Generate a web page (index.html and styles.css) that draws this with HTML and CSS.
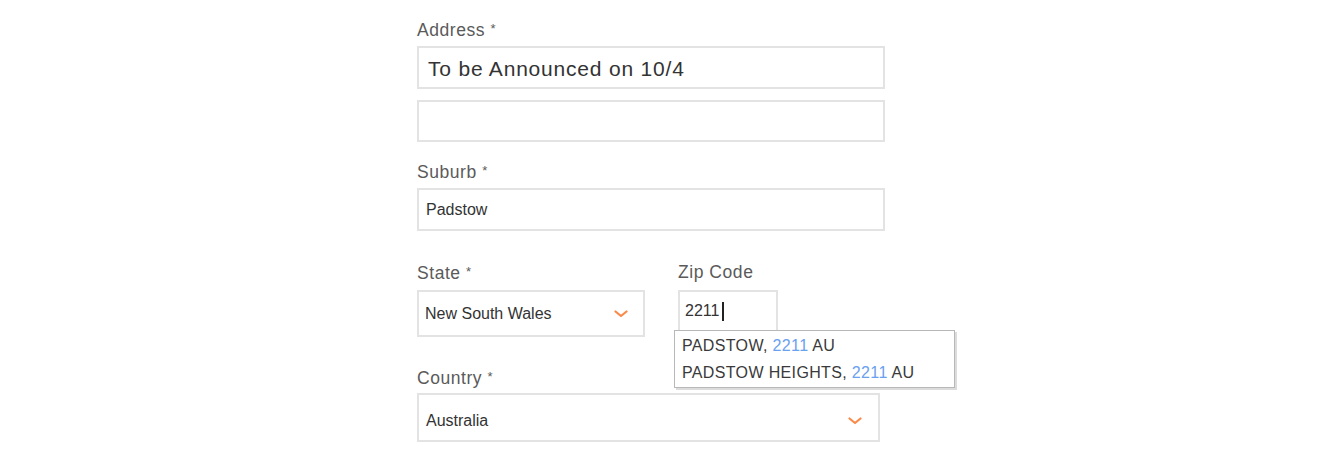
FILE: index.html
```html
<!DOCTYPE html>
<html lang="en">
<head>
<meta charset="utf-8">
<title>Address form</title>
<link rel="stylesheet" href="styles.css">
</head>
<body>
<form class="form">
  <div class="field">
    <div class="label">Address <span class="req">*</span></div>
    <div class="box box-address"><span class="val-lg">To be Announced on 10/4</span></div>
    <div class="box box-address2"></div>
  </div>

  <div class="field field-suburb">
    <div class="label">Suburb <span class="req">*</span></div>
    <div class="box box-suburb"><span class="val">Padstow</span></div>
  </div>

  <div class="row">
    <div class="field field-state">
      <div class="label">State <span class="req">*</span></div>
      <div class="box box-select box-state">
        <span class="val">New South Wales</span>
        <svg class="chev" width="14" height="8" viewBox="0 0 14 8"><path d="M1.5 1.5 L7 6 L12.5 1.5" fill="none" stroke="#f98a4a" stroke-width="2.2" stroke-linecap="round" stroke-linejoin="round"/></svg>
      </div>
    </div>
    <div class="field field-zip">
      <div class="label">Zip Code</div>
      <div class="box box-zip"><span class="val">2211</span><span class="caret"></span></div>
      <ul class="suggest">
        <li>PADSTOW, <span class="hl">2211</span> AU</li>
        <li>PADSTOW HEIGHTS, <span class="hl">2211</span> AU</li>
      </ul>
    </div>
  </div>

  <div class="field field-country">
    <div class="label">Country <span class="req">*</span></div>
    <div class="box box-select box-country">
      <span class="val">Australia</span>
      <svg class="chev" width="14" height="8" viewBox="0 0 14 8"><path d="M1.5 1.5 L7 6 L12.5 1.5" fill="none" stroke="#f98a4a" stroke-width="2.2" stroke-linecap="round" stroke-linejoin="round"/></svg>
    </div>
  </div>
</form>
</body>
</html>
```

FILE: styles.css
```css
html, body {
  margin: 0;
  padding: 0;
  background: #ffffff;
}

body {
  font-family: "Liberation Sans", Arial, sans-serif;
  color: #333;
}

.form {
  width: 468px;
  margin-left: 417px;
  padding-top: 19px;
}

.label {
  font-size: 17.5px;
  letter-spacing: 0.55px;
  line-height: 20px;
  height: 20px;
  color: #5a5a5a;
  margin-bottom: 7px;
}

.req {
  font-size: 13px;
  vertical-align: 3px;
}

.box {
  box-sizing: border-box;
  border: 2px solid #e3e3e3;
  background: #fff;
  display: flex;
  align-items: center;
}

.box-address {
  height: 43px;
  padding-left: 9px;
  padding-top: 2px;
}

.box-address2 {
  height: 42px;
  margin-top: 11px;
}

.val-lg {
  font-size: 21px;
  letter-spacing: 0.8px;
  color: #333;
}

.val {
  font-size: 16px;
  color: #333;
}

.field-suburb {
  margin-top: 19px;
}

.box-suburb {
  height: 43px;
  padding-left: 7px;
}

.row {
  display: flex;
  gap: 33px;
  margin-top: 31px;
}

.field-state {
  width: 228px;
}

.field-state .label,
.field-zip .label {
  margin-bottom: 8px;
}

.box-select {
  justify-content: space-between;
  padding-left: 6px;
  padding-right: 15px;
}

.box-state {
  height: 47px;
}

.chev {
  display: block;
}

.field-zip {
  position: relative;
  width: 100px;
}

.box-zip {
  width: 100px;
  height: 42px;
  padding-left: 5px;
  align-items: center;
}

.caret {
  display: inline-block;
  width: 1.5px;
  height: 19px;
  background: #222;
  margin-left: 3px;
}

.suggest {
  position: absolute;
  left: -4px;
  top: 68px;
  width: 281px;
  height: 58px;
  box-sizing: border-box;
  margin: 0;
  padding: 1px 0 0 7px;
  list-style: none;
  background: #fff;
  border: 1px solid #b8b8b8;
  box-shadow: 2px 2px 0 #dcdcdc;
  font-size: 16px;
  letter-spacing: 0.35px;
  color: #3a3a3a;
}

.suggest li {
  line-height: 27px;
  height: 27px;
  white-space: nowrap;
}

.hl {
  color: #6aa0f0;
}

.field-country {
  margin-top: 30px;
  width: 463px;
}

.field-country .label {
  margin-bottom: 6px;
}

.box-country {
  height: 49px;
  padding-top: 6px;
  padding-left: 7px;
  padding-right: 16px;
}
```
